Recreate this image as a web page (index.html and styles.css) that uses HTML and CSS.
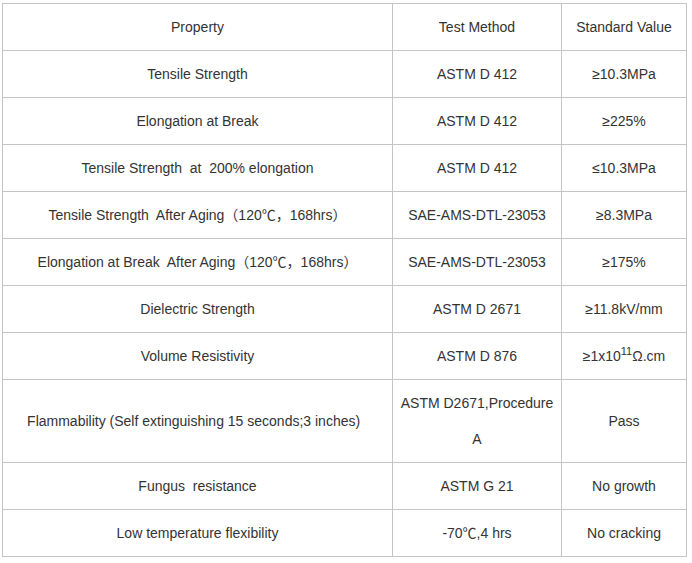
FILE: index.html
```html
<!DOCTYPE html>
<html>
<head>
<meta charset="utf-8">
<link rel="stylesheet" href="styles.css">
</head>
<body>
<table class="spec">
  <colgroup>
    <col class="c1"><col class="c2"><col class="c3">
  </colgroup>
  <tr><td>Property</td><td>Test Method</td><td>Standard Value</td></tr>
  <tr><td>Tensile Strength</td><td>ASTM D 412</td><td>≥10.3MPa</td></tr>
  <tr><td>Elongation at Break</td><td>ASTM D 412</td><td>≥225%</td></tr>
  <tr><td>Tensile Strength&nbsp; at&nbsp; 200% elongation</td><td>ASTM D 412</td><td>≤10.3MPa</td></tr>
  <tr><td>Tensile Strength&nbsp; After Aging（120℃，168hrs）</td><td>SAE-AMS-DTL-23053</td><td>≥8.3MPa</td></tr>
  <tr><td>Elongation at Break&nbsp; After Aging（120℃，168hrs）</td><td>SAE-AMS-DTL-23053</td><td>≥175%</td></tr>
  <tr><td>Dielectric Strength</td><td>ASTM D 2671</td><td>≥11.8kV/mm</td></tr>
  <tr><td>Volume Resistivity</td><td>ASTM D 876</td><td>≥1x10<sup>11</sup>Ω.cm</td></tr>
  <tr><td>Flammability (Self extinguishing 15 seconds;3 inches)&nbsp;&nbsp;</td><td>ASTM D2671,Procedure A</td><td>Pass</td></tr>
  <tr><td>Fungus&nbsp; resistance</td><td>ASTM G 21</td><td>No growth</td></tr>
  <tr><td>Low temperature flexibility</td><td>-70℃,4 hrs</td><td>No cracking</td></tr>
</table>
</body>
</html>
```
FILE: styles.css
```css
html, body {
  margin: 0;
  padding: 0;
  background: #fff;
}
body {
  padding: 3px 0 0 2px;
  font-family: "Liberation Sans", Arial, "Noto Sans CJK SC", sans-serif;
  font-size: 14px;
  color: #333;
}
.spec {
  border-collapse: collapse;
  table-layout: fixed;
  width: 684px;
}
.c1 { width: 390px; }
.c2 { width: 169px; }
.c3 { width: 125px; }
.spec td {
  border: 1px solid #c4c4c4;
  padding: 5px 6px;
  line-height: 36px;
  text-align: center;
  vertical-align: middle;
}
.spec sup {
  font-size: 11px;
  line-height: 0;
  vertical-align: 6px;
}
```
